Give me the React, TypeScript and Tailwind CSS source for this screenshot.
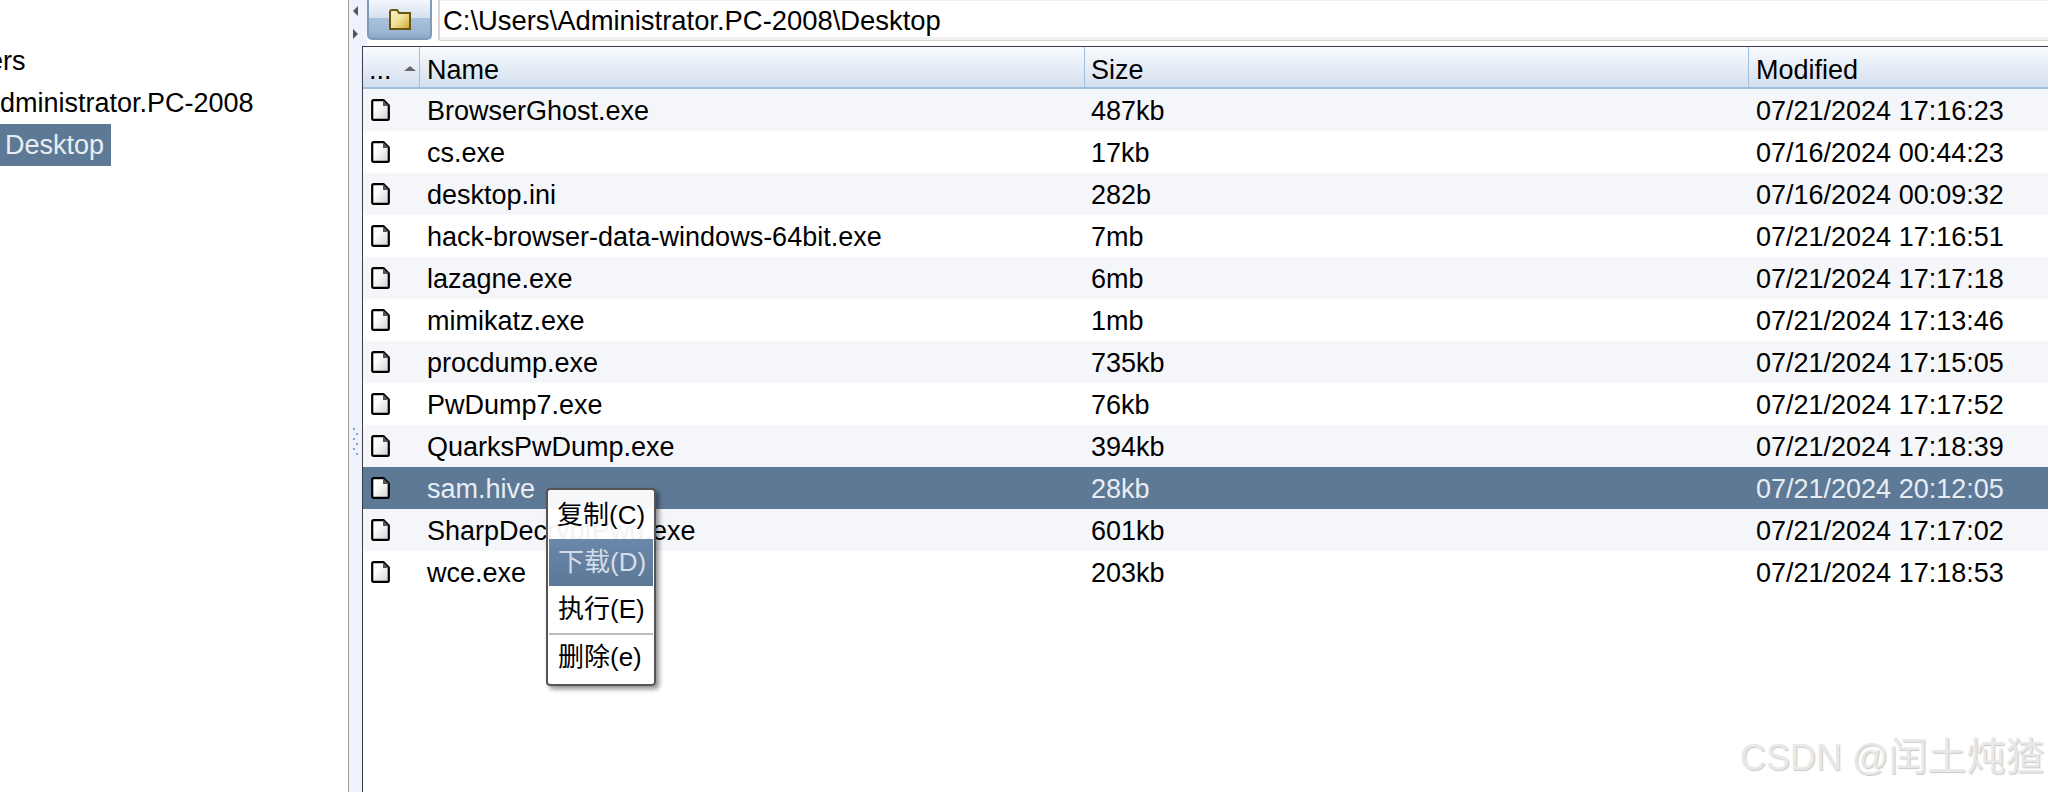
const files = [
  { name: "BrowserGhost.exe", size: "487kb", date: "07/21/2024 17:16:23" },
  { name: "cs.exe", size: "17kb", date: "07/16/2024 00:44:23" },
  { name: "desktop.ini", size: "282b", date: "07/16/2024 00:09:32" },
  { name: "hack-browser-data-windows-64bit.exe", size: "7mb", date: "07/21/2024 17:16:51" },
  { name: "lazagne.exe", size: "6mb", date: "07/21/2024 17:17:18" },
  { name: "mimikatz.exe", size: "1mb", date: "07/21/2024 17:13:46" },
  { name: "procdump.exe", size: "735kb", date: "07/21/2024 17:15:05" },
  { name: "PwDump7.exe", size: "76kb", date: "07/21/2024 17:17:52" },
  { name: "QuarksPwDump.exe", size: "394kb", date: "07/21/2024 17:18:39" },
  { name: "sam.hive", size: "28kb", date: "07/21/2024 20:12:05" },
  { name: "SharpDecryptPwd.exe", size: "601kb", date: "07/21/2024 17:17:02" },
  { name: "wce.exe", size: "203kb", date: "07/21/2024 17:18:53" },
];

function FileIcon() {
  return (
    <svg width="19" height="22" viewBox="0 0 19 22" className="shrink-0">
      <defs>
        <linearGradient id="page" x1="0" y1="0" x2="1" y2="1">
          <stop offset="0.35" stopColor="#ffffff" />
          <stop offset="1" stopColor="#cfcfcf" />
        </linearGradient>
      </defs>
      <path d="M1.2 2.6 Q1.2 1.2 2.6 1.2 H12.5 L17.8 6.5 V19.4 Q17.8 20.8 16.4 20.8 H2.6 Q1.2 20.8 1.2 19.4 Z" fill="url(#page)" stroke="#000" strokeWidth="2.2" />
      <path d="M12 1 V7 H18 Z" fill="#555" />
    </svg>
  );
}

function FolderIcon() {
  return (
    <svg width="22" height="21" viewBox="0 0 22 21">
      <defs>
        <linearGradient id="folder" x1="0" y1="0" x2="1" y2="1">
          <stop offset="0" stopColor="#f9f3cc" />
          <stop offset="0.5" stopColor="#f1e196" />
          <stop offset="1" stopColor="#c6a232" />
        </linearGradient>
      </defs>
      <path d="M1 3 Q1 1 3 1 H8 L10 4 H21 V20 H1 Z" fill="url(#folder)" stroke="#6a5510" strokeWidth="2" />
    </svg>
  );
}

function MenuItem({ label, active }: { label: string; active?: boolean }) {
  return (
    <div className={active ? "h-[47px] pl-[9px] leading-[47px] text-[#d5dde8] bg-linear-to-b from-[#6a88aa] to-[#5c7896]" : "h-[47px] pl-[9px] leading-[47px] text-black"}>
      {label}
    </div>
  );
}

export default function App() {
  return (
    <div className="flex h-[792px] w-[2048px] overflow-hidden bg-white text-[27px] text-black font-['Liberation_Sans','Noto_Sans_CJK_SC',sans-serif]">
      {/* tree */}
      <div className="w-[348px] shrink-0 overflow-hidden pt-[40px]">
        <div className="ml-[-45px] h-[42px] leading-[42px]">Users</div>
        <div className="ml-[-18px] h-[42px] leading-[42px]">Administrator.PC-2008</div>
        <div className="h-[42px] w-[111px] bg-[#5d7995] pl-[5px] leading-[42px] text-[#e8edf3]">Desktop</div>
      </div>

      <div className="w-px shrink-0 bg-[#a0a0a0]" />

      {/* splitter */}
      <div className="flex w-[13px] shrink-0 flex-col items-center bg-[#eef2fc]">
        <div className="mt-[6px] h-0 w-0 border-y-[5px] border-r-[5px] border-y-transparent border-r-[#555]" />
        <div className="mt-[13px] h-0 w-0 border-y-[5px] border-l-[5px] border-y-transparent border-l-[#555]" />
        <div className="mt-[389px] flex flex-col gap-[3px]">
          {[0, 1, 2, 3, 4, 5].map((i) => (
            <div key={i} className={i % 2 ? "ml-[3px] h-[2px] w-[2px] bg-[#8fa3bd]" : "h-[2px] w-[2px] bg-[#8fa3bd]"} />
          ))}
        </div>
      </div>

      <div className="flex min-w-0 flex-1 flex-col">
        {/* path bar */}
        <div className="flex h-[46px] shrink-0 border-l-[5px] border-[#eef2fc] bg-white">
          <div className="flex h-[40px] w-[65px] items-center justify-center rounded-b-[5px] border-x-2 border-b-2 border-[#7f9bbb] bg-[linear-gradient(to_bottom,#f4f7fb_0%,#d5e0ec_48%,#a9c1dc_48%,#9cb5d2_85%,#8aa5c4_100%)]">
            <FolderIcon />
          </div>
          <div className="ml-[6px] h-[41px] flex-1 rounded-bl-[3px] border-b border-l-2 border-t border-[#d4d4d4] border-t-[#eeeeee] bg-white pl-[3px] text-[27.4px] leading-[40px] shadow-[inset_0_-3px_0_#f0f0f0]">
            C:\Users\Administrator.PC-2008\Desktop
          </div>
        </div>

        {/* table */}
        <div className="flex-1 border-l border-t border-[#3c3c48]">
          <div className="flex h-[42px] border-b-2 border-[#9dbfe0] bg-linear-to-b from-[#f9fbff] to-[#d3dfee] leading-[46px]">
            <div className="relative w-[57px] border-r border-[#9dbfe0] pl-[6px]">
              ...
              <div className="absolute right-[3px] top-[19px] h-0 w-0 border-x-[6px] border-b-[5px] border-x-transparent border-b-[#666]" />
            </div>
            <div className="w-[665px] border-r border-[#9dbfe0] pl-[7px]">Name</div>
            <div className="w-[664px] border-r border-[#9dbfe0] pl-[6px]">Size</div>
            <div className="flex-1 pl-[7px]">Modified</div>
          </div>
          {files.map((f, i) => {
            const selected = f.name === "sam.hive";
            const rowClass = selected ? "bg-[#5d7995] text-[#e8edf3]" : i % 2 === 0 ? "bg-[#f5f6fa]" : "bg-white";
            return (
              <div key={f.name} className={`flex h-[42px] leading-[44px] ${rowClass}`}>
                <div className="flex w-[57px] items-center pl-[8px]">
                  <FileIcon />
                </div>
                <div className="w-[665px] pl-[7px]">{f.name}</div>
                <div className="w-[664px] pl-[6px]">{f.size}</div>
                <div className="flex-1 pl-[7px]">{f.date}</div>
              </div>
            );
          })}
        </div>
      </div>

      {/* context menu */}
      <div className="absolute left-[546px] top-[488px] h-[198px] w-[110px] rounded-[4px] border-2 border-[#555] bg-white/95 px-px pt-[2px] text-[26px] shadow-[3px_3px_5px_rgba(0,0,0,0.45)]">
        <div className="h-[47px] pl-[8px] leading-[47px]">复制(C)</div>
        <MenuItem label="下载(D)" active />
        <MenuItem label="执行(E)" />
        <div className="h-[2px] bg-[#bdbdbd]" />
        <div className="h-[47px] pl-[9px] leading-[44px]">删除(e)</div>
      </div>

      {/* watermark */}
      <div className="absolute left-[1740px] top-[732px] whitespace-nowrap text-[36px] leading-[50px] text-[#e8e8e8] [text-shadow:1px_1px_1px_#c8c8c8]">
        CSDN @<span className="text-[39px]">闰土炖猹</span>
      </div>
    </div>
  );
}
